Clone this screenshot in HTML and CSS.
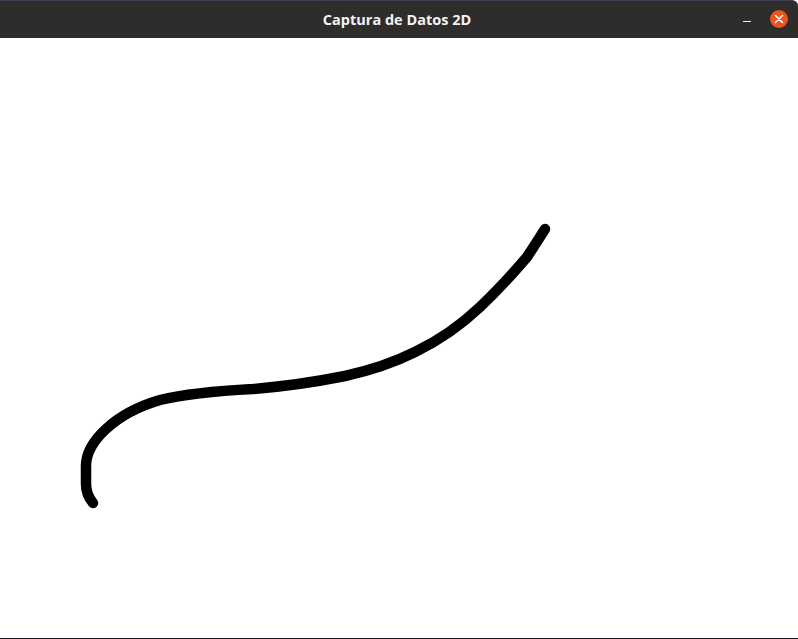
FILE: index.html
```html
<!DOCTYPE html>
<html lang="es">
<head>
<meta charset="utf-8">
<title>Captura de Datos 2D</title>
<link rel="stylesheet" href="styles.css">
</head>
<body>
<div class="window">
  <header class="titlebar">
    <div class="title">Captura de Datos 2D</div>
    <div class="controls">
      <span class="minimize"></span>
      <span class="close">
        <svg width="18" height="18" viewBox="0 0 18 18"><path d="M5.5 5.5 L12.5 12.5 M12.5 5.5 L5.5 12.5" stroke="#fff" stroke-width="1.5" stroke-linecap="round"/></svg>
      </span>
    </div>
  </header>
  <main class="canvas">
    <svg class="drawing" width="798" height="600" viewBox="0 38 798 600">
      <path fill="none" stroke="#000" stroke-width="10.5" stroke-linejoin="round" stroke-linecap="round"
        d="M93,503 C88,497 86,492 86,484 L86,466 C86,452 94,440 106,429 C120,416 136,407 160,400 C185,394 215,391 253,389 C290,386 320,381 345,376 C372,370 395,362 415,352 C440,340 460,326 480,307 C500,288 515,271 527,257 C535,245 540,237 545,229"/>
    </svg>
  </main>
  <div class="bottomline"></div>
</div>
</body>
</html>
```
FILE: styles.css
```css
* { box-sizing: border-box; }
html, body { margin: 0; padding: 0; background: #fff; }
body { width: 798px; height: 639px; overflow: hidden; }
.window { display: flex; flex-direction: column; width: 798px; height: 639px; }
.titlebar {
  height: 38px;
  flex: 0 0 38px;
  background: #2f2d2c;
  border-top: 1px solid #3b3d55;
  border-top-right-radius: 6px;
  position: relative;
  display: flex;
  align-items: center;
  justify-content: center;
}
.title {
  color: #f3f3f3;
  font-family: "Open Sans", "DejaVu Sans", sans-serif;
  font-weight: 700;
  font-size: 14.5px;
  letter-spacing: 0;
  margin-top: -1px;
  margin-left: -4px;
}
.controls {
  position: absolute;
  right: 10px;
  top: 0;
  height: 37px;
  display: flex;
  align-items: center;
  gap: 19px;
}
.minimize {
  display: block;
  width: 8px;
  height: 1px;
  background: #eee;
  margin-top: 3px;
}
.close {
  width: 18px;
  height: 18px;
  border-radius: 50%;
  background: #e95420;
  display: flex;
  margin-top: -1px;
}
.canvas { flex: 1; background: #fff; }
.drawing { display: block; }
.bottomline { height: 1px; flex: 0 0 1px; background: #1e1b2a; }
```
